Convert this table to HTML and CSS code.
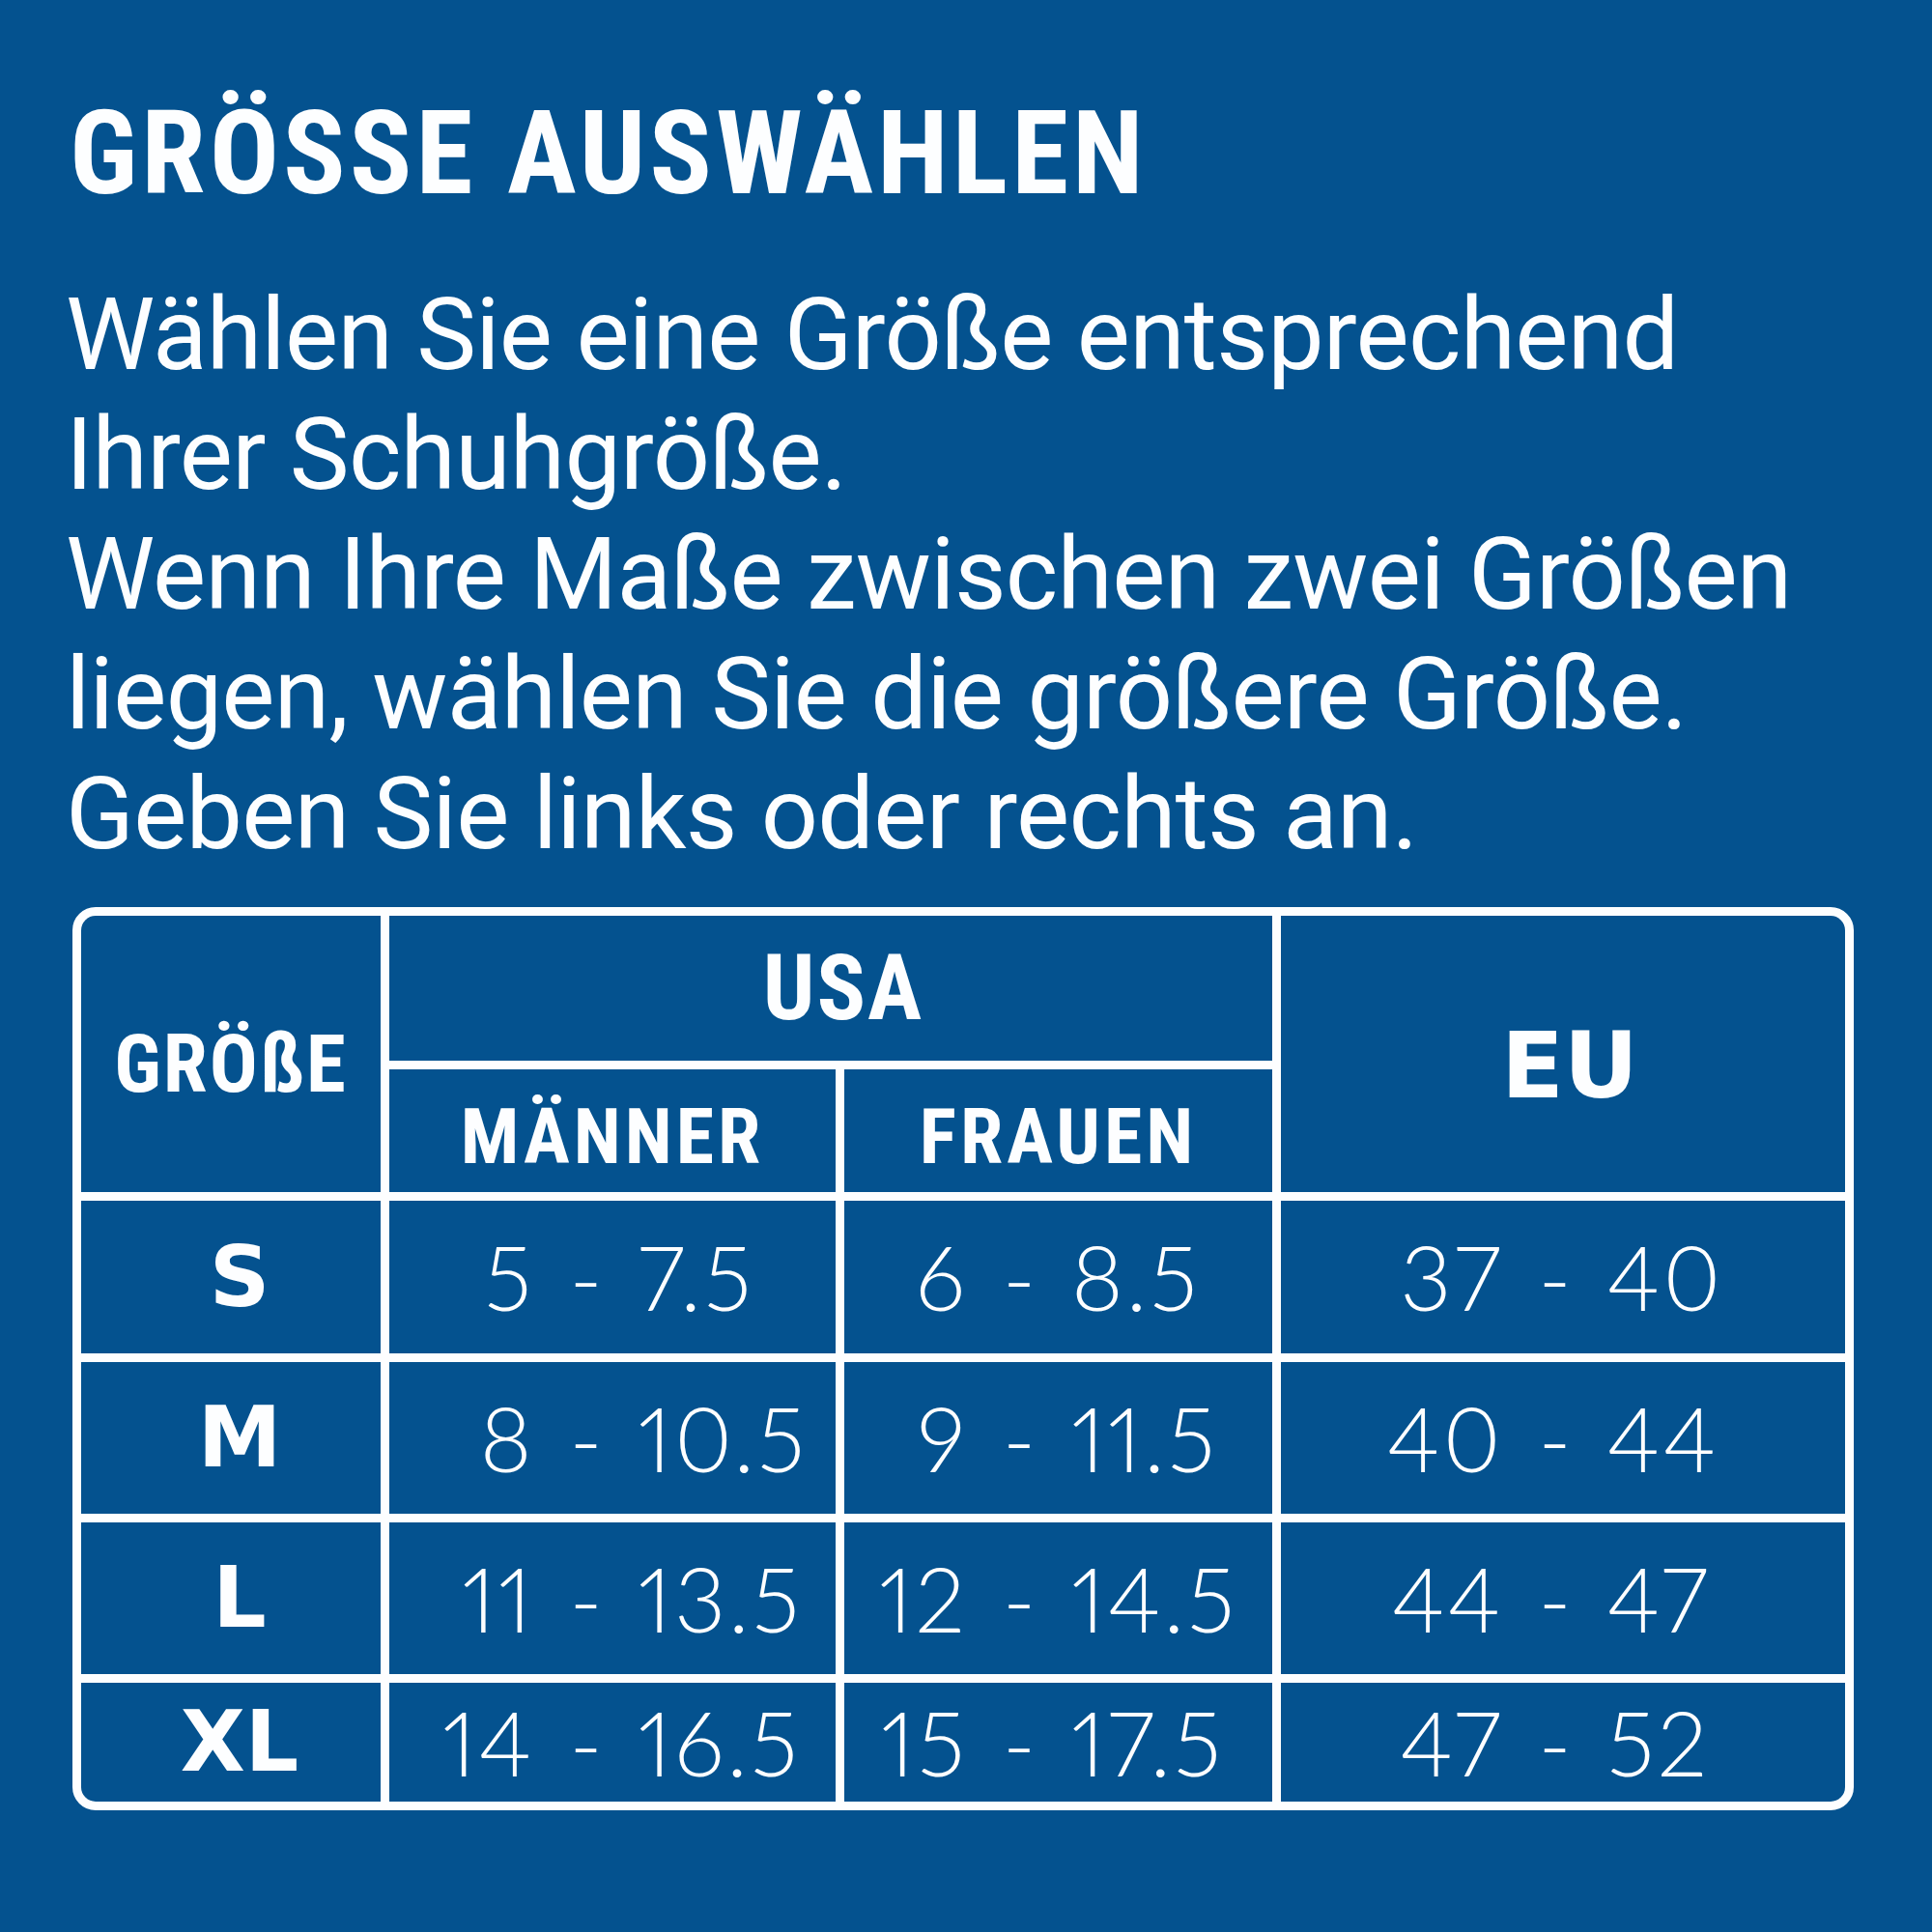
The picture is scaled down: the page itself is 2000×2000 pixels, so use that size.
FILE: index.html
```html
<!DOCTYPE html>
<html lang="de">
<head>
<meta charset="utf-8">
<title>Größe auswählen</title>
<link rel="stylesheet" href="styles.css">
</head>
<body>
<main class="page">
  <h1 class="title"><span class="cond">GRÖSSE AUSWÄHLEN</span></h1>
  <p class="intro">Wählen Sie eine Größe entsprechend<br>Ihrer Schuhgröße.<br>Wenn Ihre Maße zwischen zwei Größen<br>liegen, wählen Sie die größere Größe.<br>Geben Sie links oder rechts an.</p>

  <div class="chart">
    <div class="cell head size-head"><span class="cond">GRÖßE</span></div>
    <div class="cell head usa"><span class="cond">USA</span></div>
    <div class="cell head eu">EU</div>
    <div class="cell head sub"><span class="cond">MÄNNER</span></div>
    <div class="cell head sub"><span class="cond">FRAUEN</span></div>

    <div class="cell size">S</div>
    <div class="cell v men"><span class="a">5</span><span class="d">-</span><span class="b">7.5</span></div>
    <div class="cell v women"><span class="a">6</span><span class="d">-</span><span class="b">8.5</span></div>
    <div class="cell v euv"><span class="a">37</span><span class="d">-</span><span class="b">40</span></div>

    <div class="cell size">M</div>
    <div class="cell v men"><span class="a">8</span><span class="d">-</span><span class="b">10.5</span></div>
    <div class="cell v women"><span class="a">9</span><span class="d">-</span><span class="b">11.5</span></div>
    <div class="cell v euv"><span class="a">40</span><span class="d">-</span><span class="b">44</span></div>

    <div class="cell size">L</div>
    <div class="cell v men"><span class="a">11</span><span class="d">-</span><span class="b">13.5</span></div>
    <div class="cell v women"><span class="a">12</span><span class="d">-</span><span class="b">14.5</span></div>
    <div class="cell v euv"><span class="a">44</span><span class="d">-</span><span class="b">47</span></div>

    <div class="cell size">XL</div>
    <div class="cell v men"><span class="a">14</span><span class="d">-</span><span class="b">16.5</span></div>
    <div class="cell v women"><span class="a">15</span><span class="d">-</span><span class="b">17.5</span></div>
    <div class="cell v euv"><span class="a">47</span><span class="d">-</span><span class="b">52</span></div>
  </div>
</main>
</body>
</html>
```

FILE: styles.css
```css
html, body {
  margin: 0;
  padding: 0;
  background: #04528f;
}

body {
  width: 2000px;
  height: 2000px;
  color: #fdfeff;
  font-family: Roboto, "Liberation Sans", sans-serif;
}

.page {
  padding: 99px 0 0 68px;
}

.cond {
  display: inline-block;
  font-family: "Roboto Condensed", Roboto, "Liberation Sans", sans-serif;
  font-weight: 700;
}

.title {
  margin: 0 0 0 4px;
  font-size: 120px;
  line-height: 1;
  font-weight: 700;
  letter-spacing: 4px;
}

.intro {
  margin: 66px 0 0 0;
  font-size: 104px;
  line-height: 124px;
  font-weight: 400;
  letter-spacing: -0.7px;
}

.chart {
  margin: 34px 0 0 7px;
  display: grid;
  grid-template-columns: 310px 462px 443px 584px;
  grid-template-rows: 150px 127px 158px 157px 157px 123px;
  gap: 9px;
  width: max-content;
  background: #fdfeff;
  border: 9px solid #fdfeff;
  border-radius: 24px;
  overflow: hidden;
}

.cell {
  background: #04528f;
  display: flex;
  align-items: center;
  justify-content: center;
  line-height: 1;
}

.size-head {
  grid-row: 1 / 3;
  grid-column: 1;
  font-size: 83px;
  padding-top: 20px;
  letter-spacing: 2px;
}

.usa {
  grid-row: 1;
  grid-column: 2 / 4;
  font-size: 94px;
  padding-left: 26px;
  letter-spacing: 2px;
}

.eu {
  grid-row: 1 / 3;
  grid-column: 4;
  font-family: "DejaVu Sans", Lato, sans-serif;
  font-weight: 700;
  font-size: 95px;
  padding-top: 24px;
  padding-left: 14px;
}

.sub {
  font-size: 80px;
  padding-top: 12px;
  letter-spacing: 4px;
}

.size {
  font-family: "DejaVu Sans", Lato, sans-serif;
  font-weight: 700;
  font-size: 87px;
  padding-left: 18px;
}

.v {
  display: grid;
  grid-template-columns: minmax(0, 1fr) auto minmax(0, 1fr);
  align-items: center;
  font-family: Lato, "Open Sans", sans-serif;
  font-weight: 300;
  font-size: 92px;
  letter-spacing: 3px;
  font-variant-numeric: proportional-nums;
  white-space: nowrap;
}

.v .a { text-align: right; }
.v .b { text-align: left; }
.v .d { padding-top: 2px; margin: 0 34px 0 36px; }

.men { padding-right: 54px; }
.women { padding-right: 80px; }
.euv { padding-right: 16px; }
```
